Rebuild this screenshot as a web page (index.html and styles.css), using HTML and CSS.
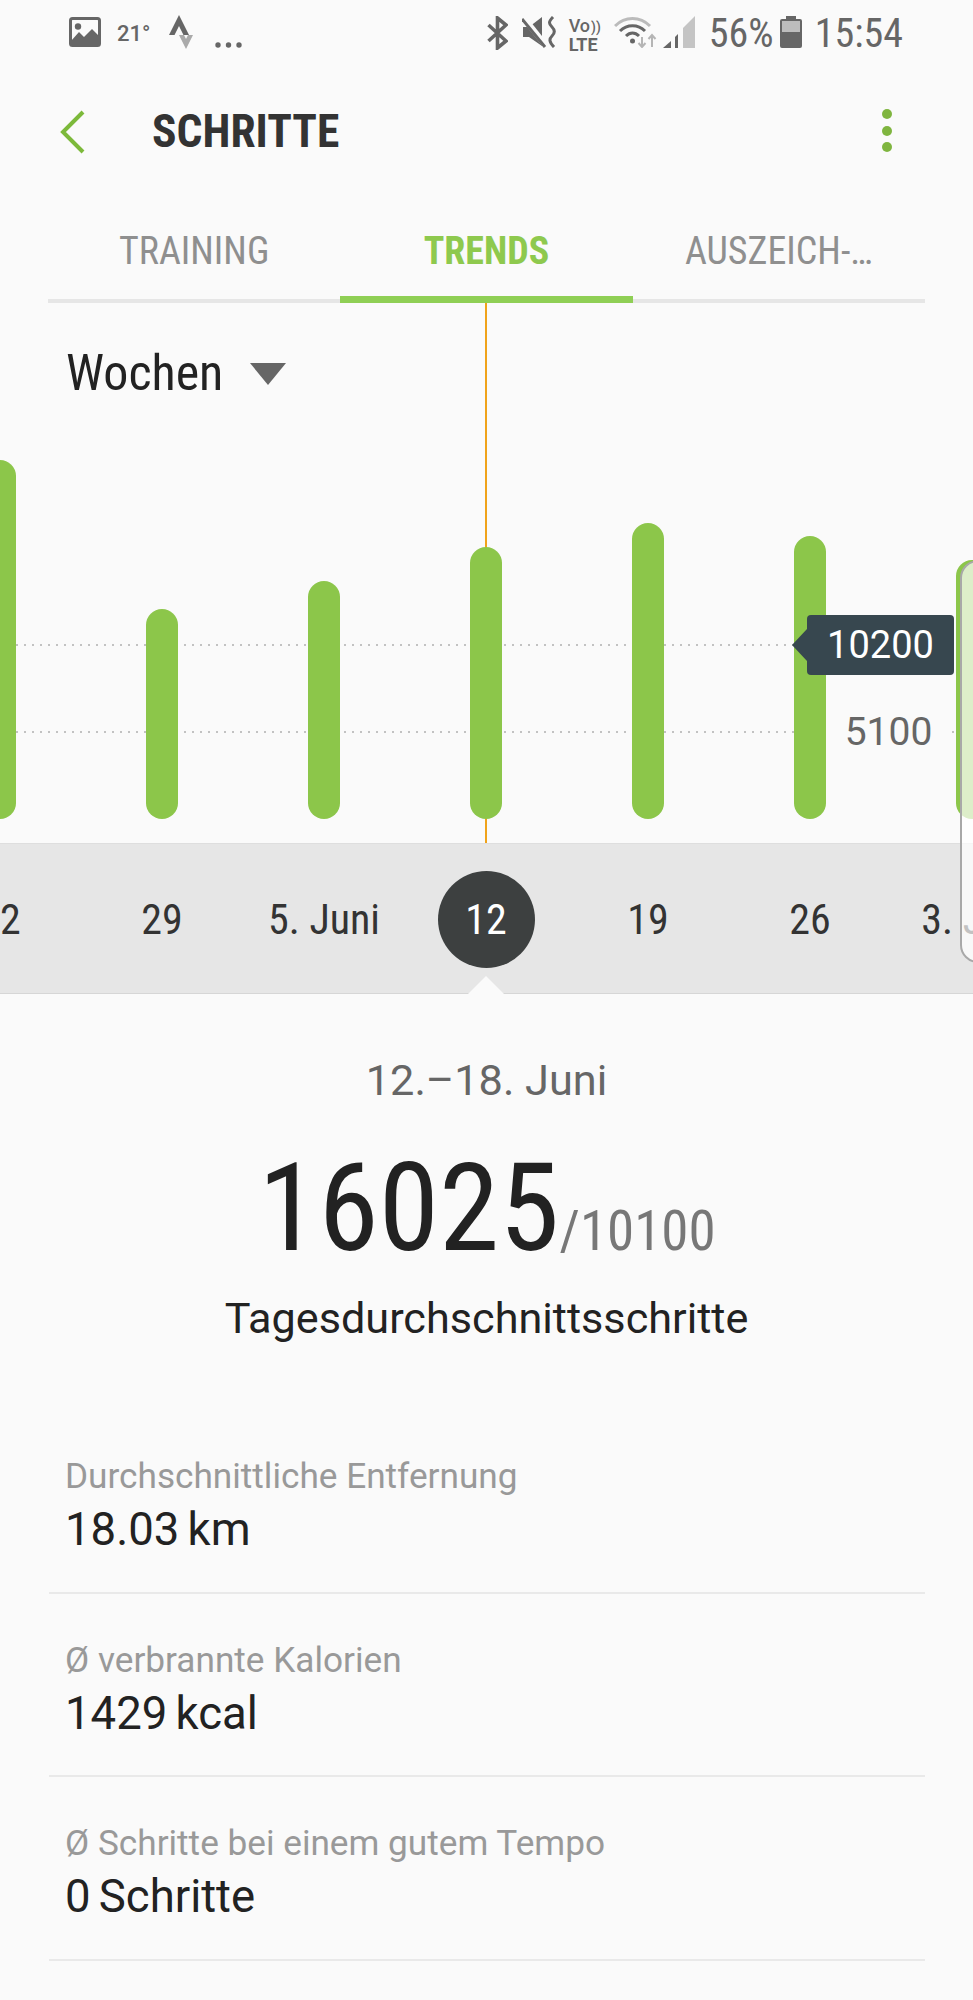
FILE: index.html
```html
<!DOCTYPE html>
<html lang="de">
<head>
  <meta charset="UTF-8" />
  <meta name="viewport" content="width=device-width, initial-scale=1.0"/>
  <title>Schritte</title>
  <link rel="stylesheet" href="styles.css">
</head>
<body>
  <div class="status">
    <div class="status-left">
      <svg class="ic-image" width="32" height="30" viewBox="0 0 32 30">
        <rect x="1.5" y="1.5" width="29" height="27" rx="2" fill="#fafafa" stroke="#666" stroke-width="3"/>
        <circle cx="9" cy="9.5" r="3.2" fill="#666"/>
        <path d="M2 24 L10 15 L15 20 L23 12 L30 19 V28 H2 Z" fill="#666"/>
      </svg>
      <span class="temp">21°</span>
      <svg class="ic-strava" width="24" height="34" viewBox="0 0 24 34">
        <path d="M10 0 L20 20 H14.500 L10 11 L5.500 20 H0 Z" fill="#666"/>
        <path d="M10 20 H15 L17 24 L19 20 H24 L17 34 Z" fill="#aaa"/>
      </svg>
      <svg class="ic-more" width="27" height="6" viewBox="0 0 27 6">
        <circle cx="3" cy="3" r="2.700" fill="#666"/>
        <circle cx="13.500" cy="3" r="2.700" fill="#666"/>
        <circle cx="24" cy="3" r="2.700" fill="#666"/>
      </svg>
    </div>
    <div class="status-right">
      <svg class="ic-bt" width="21" height="34" viewBox="0 0 21 34">
        <path d="M1.500 9 L19 25 L10.500 32 V2 L19 9 L1.500 25" fill="none" stroke="#666" stroke-width="3.600"/>
      </svg>
      <svg class="ic-mute" width="35" height="32" viewBox="0 0 35 32">
        <path d="M1 11 H7 L20 1 V30 L7 21 H1 Z" fill="#666"/>
        <path d="M1 1 L25 31" stroke="#fafafa" stroke-width="6"/>
        <path d="M0 3 L23 31" stroke="#666" stroke-width="3"/>
        <path d="M31 1 C26 6 27 8 30 11 C33 14 33 17 30 20 C27 23 27 26 32 31" fill="none" stroke="#666" stroke-width="3"/>
      </svg>
      <div class="volte">
        <div class="volte-top">Vo<span class="volte-arcs">))</span></div>
        <div>LTE</div>
      </div>
      <svg class="ic-wifi" width="43" height="32" viewBox="0 0 43 32">
        <path d="M1 10 C11 0 26 0 36 10" fill="none" stroke="#bbb" stroke-width="3"/>
        <path d="M6 15 C13 8 24 8 31 15" fill="none" stroke="#666" stroke-width="3"/>
        <path d="M12 20 C16 16 21 16 25 20" fill="none" stroke="#666" stroke-width="3"/>
        <circle cx="18.500" cy="25" r="2.500" fill="#666"/>
        <path d="M28 21 V31 M24.500 27 L28 31 L31.500 27" fill="none" stroke="#b5b5b5" stroke-width="2"/>
        <path d="M38 31 V19 M34.500 23 L38 19 L41.500 23" fill="none" stroke="#b5b5b5" stroke-width="2"/>
      </svg>
      <svg class="ic-signal" width="33" height="32" viewBox="0 0 33 32">
        <path d="M1 32 L9 25 V32 Z" fill="#666"/>
        <path d="M13 21 L16 18 V32 H13 Z" fill="#666"/>
        <path d="M21 12 L33 0 V32 H21 Z" fill="#c4c4c4"/>
      </svg>
      <span class="battery-text">56%</span>
      <svg class="ic-battery" width="22" height="32" viewBox="0 0 22 32">
        <path d="M6 0 H16 V3 H20 Q22 3 22 5 V30 Q22 32 20 32 H2 Q0 32 0 30 V5 Q0 3 2 3 H6 Z" fill="#666"/>
        <rect x="2" y="5" width="18" height="11" fill="#bdbdbd"/>
      </svg>
      <span class="clock">15:54</span>
    </div>
  </div>

  <header class="appbar">
    <svg class="back" width="26" height="44" viewBox="0 0 26 44">
      <path d="M23 2 L3 22 L23 42" fill="none" stroke="#7cb93a" stroke-width="4"/>
    </svg>
    <h1 class="title">SCHRITTE</h1>
    <div class="kebab"><i></i><i></i><i></i></div>
  </header>

  <nav class="tabs">
    <div class="tab">TRAINING</div>
    <div class="tab active">TRENDS</div>
    <div class="tab">AUSZEICH-…</div>
  </nav>

  <div class="chart-area">
    <section class="chart">
      <div class="period">
        <span>Wochen</span>
        <i class="caret"></i>
      </div>
      <div class="gridline line-high"></div>
      <div class="gridline line-low"></div>
      <div class="cursor"></div>
      <div class="bars">
        <div class="bar-col"><div class="bar" style="height:359px"></div></div>
        <div class="bar-col"><div class="bar" style="height:210px"></div></div>
        <div class="bar-col"><div class="bar" style="height:238px"></div></div>
        <div class="bar-col"><div class="bar" style="height:272px"></div></div>
        <div class="bar-col"><div class="bar" style="height:296px"></div></div>
        <div class="bar-col"><div class="bar" style="height:283px"></div></div>
        <div class="bar-col"><div class="bar" style="height:259px"></div></div>
      </div>
      <div class="axis-low">5100</div>
      <div class="goal-tip">10200</div>
    </section>

    <div class="dates">
      <div class="date">22</div>
      <div class="date">29</div>
      <div class="date">5. Juni</div>
      <div class="date"><span class="date-current">12</span></div>
      <div class="date">19</div>
      <div class="date">26</div>
      <div class="date">3. Juli</div>
    </div>

    <div class="edge-panel"></div>
  </div>

  <section class="summary">
    <div class="range">12.–18. Juni</div>
    <div class="steps"><span class="steps-now">16025</span><span class="steps-goal">/10100</span></div>
    <div class="steps-label">Tagesdurchschnittsschritte</div>
  </section>

  <ul class="stats">
    <li class="stat">
      <div class="stat-label">Durchschnittliche Entfernung</div>
      <div class="stat-value">18.03 km</div>
    </li>
    <li class="stat">
      <div class="stat-label">Ø verbrannte Kalorien</div>
      <div class="stat-value">1429 kcal</div>
    </li>
    <li class="stat">
      <div class="stat-label">Ø Schritte bei einem gutem Tempo</div>
      <div class="stat-value">0 Schritte</div>
    </li>
  </ul>
</body>
</html>
```

FILE: styles.css
```css
* {
  box-sizing: border-box;
}
body {
  margin: 0;
  height: 2000px;
  overflow: hidden;
  background-color: #fafafa;
  font-family: Roboto, sans-serif;
  font-stretch: 75%;
  color: #222;
}

/* status bar */
.status {
  height: 66px;
  padding: 15px 70px 0 69px;
  display: flex;
  justify-content: space-between;
  align-items: flex-start;
}
.status-left, .status-right {
  display: flex;
  align-items: flex-start;
}
.ic-image {
  margin-top: 2px;
}
.temp {
  margin-left: 16px;
  margin-top: 6px;
  font-size: 22px;
  line-height: 26px;
  font-weight: 500;
  font-stretch: 90%;
  color: #666;
}
.ic-strava {
  margin-left: 19px;
}
.ic-more {
  margin-left: 22px;
  margin-top: 27px;
}
.status-right svg {
  margin-top: 1px;
}
.ic-mute {
  margin-left: 14px;
}
.volte {
  margin-left: 12px;
  margin-top: 2px;
  font-size: 18px;
  line-height: 17px;
  font-weight: 700;
  font-stretch: 90%;
  color: #666;
}
.volte-top {
  font-weight: 500;
}
.volte-arcs {
  font-size: 14px;
  margin-left: 1px;
}
.ic-wifi {
  margin-left: 13px;
}
.ic-signal {
  margin-left: 5px;
}
.battery-text {
  margin-left: 14px;
  margin-top: 2px;
  font-size: 40px;
  line-height: 34px;
  color: #666;
}
.ic-battery {
  margin-left: 6px;
}
.clock {
  margin-left: 13px;
  margin-top: 2px;
  font-size: 40px;
  line-height: 34px;
  color: #666;
}

/* app bar */
.appbar {
  height: 134px;
  padding: 0 81px 3px 60px;
  display: flex;
  align-items: center;
}
.back {
  flex: none;
}
.title {
  margin: 0 0 0 66px;
  flex: 1;
  font-size: 45.500px;
  font-weight: 700;
  color: #333;
}
.kebab {
  margin-bottom: 2px;
  display: flex;
  flex-direction: column;
  gap: 6.500px;
}
.kebab i {
  display: block;
  width: 10px;
  height: 10px;
  border-radius: 50%;
  background-color: #7fb53f;
}

/* tabs */
.tabs {
  height: 103px;
  margin: 0 48px;
  display: grid;
  grid-template-columns: repeat(3, 1fr);
  border-bottom: 4px solid #e6e6e6;
}
.tab {
  padding-top: 29px;
  text-align: center;
  font-size: 38px;
  line-height: 45px;
  color: #8f8f8f;
}
.tab.active {
  height: 103px;
  border-bottom: 7px solid #8fcf55;
  font-weight: 700;
  color: #8ec94e;
}

/* chart */
.chart-area {
  position: relative;
}
.chart {
  position: relative;
  height: 540px;
  display: flex;
  flex-direction: column;
}
.period {
  height: 100px;
  padding: 60px 0 0 66px;
  display: flex;
  align-items: flex-start;
  gap: 27px;
  font-size: 50px;
  line-height: 20px;
  color: #222;
}
.caret {
  width: 0;
  height: 0;
  border-left: 18px solid transparent;
  border-right: 18px solid transparent;
  border-top: 22px solid #666;
}
.gridline {
  position: absolute;
  left: 16px;
  right: 0;
  height: 2px;
  background-image: repeating-linear-gradient(90deg, #c2c2c2 0 2px, transparent 2px 8px);
}
.line-high {
  top: 341px;
}
.line-low {
  top: 428px;
}
.cursor {
  position: absolute;
  left: 485px;
  top: 0;
  bottom: 0;
  width: 2px;
  background-color: #f0a31a;
}
.bars {
  position: relative;
  flex: 1;
  margin-left: -81px;
  padding-bottom: 24px;
  display: grid;
  grid-template-columns: repeat(7, 162px);
  align-items: end;
}
.bar-col {
  display: flex;
  justify-content: center;
}
.bar {
  width: 32px;
  border-radius: 16px;
  background-color: #8cc64a;
}
.axis-low {
  position: absolute;
  left: 826px;
  top: 409px;
  width: 125px;
  background-color: #fafafa;
  text-align: center;
  font-size: 39px;
  line-height: 40px;
  font-stretch: 90%;
  color: #666;
}
.goal-tip {
  position: absolute;
  left: 807px;
  top: 312px;
  width: 147px;
  height: 60px;
  border-radius: 4px;
  background-color: #37474f;
  text-align: center;
  font-size: 38px;
  line-height: 60px;
  font-stretch: 88%;
  color: #fff;
}
.goal-tip::before {
  content: "";
  position: absolute;
  left: -15px;
  top: 14px;
  border-top: 16px solid transparent;
  border-bottom: 16px solid transparent;
  border-right: 15px solid #37474f;
}

/* date strip */
.dates {
  position: relative;
  height: 151px;
  width: 1054px;
  margin-left: -81px;
  padding-top: 2px;
  display: grid;
  grid-template-columns: repeat(7, 162px);
  align-items: center;
  background-color: #e6e6e6;
  border-top: 1px solid #dedede;
  border-bottom: 1px solid #d6d6d6;
}
.dates::after {
  content: "";
  position: absolute;
  left: 549px;
  bottom: -1px;
  border-left: 18px solid transparent;
  border-right: 18px solid transparent;
  border-bottom: 18px solid #fafafa;
}
.date {
  display: flex;
  justify-content: center;
  font-size: 42px;
  line-height: 97px;
  font-stretch: 78%;
  white-space: nowrap;
  color: #333;
}
.date-current {
  width: 97px;
  height: 97px;
  border-radius: 50%;
  background-color: #3d4040;
  text-align: center;
  color: #fff;
}
.edge-panel {
  position: absolute;
  left: 960px;
  top: 257px;
  width: 40px;
  height: 403px;
  border: 2px solid #a8a8a8;
  border-radius: 18px 0 0 18px;
  background-color: rgba(255, 255, 255, 0.7);
}

/* summary */
.summary {
  padding-top: 61px;
  text-align: center;
}
.range {
  font-size: 43.300px;
  line-height: 52px;
  font-stretch: 100%;
  color: #666;
}
.steps {
  margin-top: 47px;
  padding-left: 1px;
  line-height: 110px;
  white-space: nowrap;
}
.steps-now {
  font-size: 122px;
  color: #222;
}
.steps-goal {
  font-size: 55px;
  color: #777;
}
.steps-label {
  margin-top: -7px;
  font-size: 43.200px;
  line-height: 52px;
  font-stretch: 100%;
  color: #222;
}

/* stat rows */
.stats {
  list-style: none;
  margin: 65px 48px 0 49px;
  padding: 0;
}
.stat {
  height: 183.500px;
  padding: 44px 0 0 16px;
  border-bottom: 2px solid #e9e9e9;
}
.stat-label {
  font-size: 35.200px;
  line-height: 44px;
  font-stretch: 100%;
  color: #999;
}
.stat-value {
  margin-top: 5px;
  font-size: 45.500px;
  line-height: 54px;
  font-stretch: 100%;
  word-spacing: -3px;
  color: #222;
}
```
